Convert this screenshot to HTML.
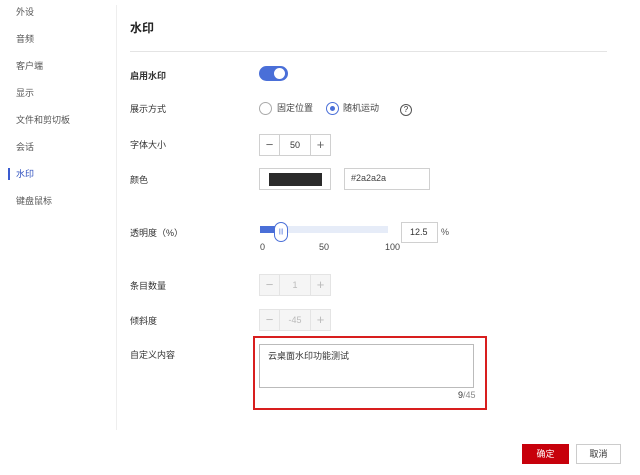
<!DOCTYPE html>
<html><head><meta charset="utf-8"><style>
body{margin:0;width:640px;height:475px;background:#fff;font-family:"Liberation Sans","Noto Sans CJK SC",sans-serif;font-size:9px;color:#333;position:relative;overflow:hidden}
.a{position:absolute;white-space:nowrap}
.side{color:#555;font-size:9px}
.lab{left:130px;font-size:9px;color:#333}
.box{position:absolute;border:1px solid #d0d0d0;box-sizing:border-box;background:#fff}
.step{position:absolute;width:72px;height:22px;border:1px solid #d0d0d0;box-sizing:border-box}
.step .m,.step .p{position:absolute;top:0;width:19px;height:20px;text-align:center;line-height:19px;font-size:13px;color:#666}
.step .m{left:0;border-right:1px solid #d0d0d0}
.step .p{right:0;border-left:1px solid #d0d0d0}
.step .v{position:absolute;left:19px;right:19px;top:0;line-height:20px;text-align:center;font-size:9px}
.dis{background:#f5f5f5;border-color:#e4e4e4}
.dis .m,.dis .p{border-color:#e4e4e4;color:#bbb}
.dis .v{color:#bbb}
</style></head><body>
<div class="a side" style="left:16px;top:5px">外设</div>
<div class="a side" style="left:16px;top:32px">音频</div>
<div class="a side" style="left:16px;top:59px">客户端</div>
<div class="a side" style="left:16px;top:86px">显示</div>
<div class="a side" style="left:16px;top:113px">文件和剪切板</div>
<div class="a side" style="left:16px;top:140px">会话</div>
<div class="a" style="left:8px;top:168px;width:2px;height:12px;background:#3a5bd0"></div>
<div class="a side" style="left:16px;top:167px;color:#2d4fbf">水印</div>
<div class="a side" style="left:16px;top:194px">键盘鼠标</div>
<div class="a" style="left:116px;top:5px;width:1px;height:425px;background:#eee"></div>

<div class="a" style="left:130px;top:19px;font-size:12px;font-weight:bold;color:#222">水印</div>
<div class="a" style="left:130px;top:51px;width:477px;height:1px;background:#e4e4e4"></div>

<div class="a lab" style="top:69px;font-weight:bold">启用水印</div>
<div class="a" style="left:259px;top:66px;width:29px;height:15px;border-radius:8px;background:#4a6fd8"></div>
<div class="a" style="left:274px;top:68px;width:11px;height:11px;border-radius:50%;background:#fff"></div>

<div class="a lab" style="top:102px">展示方式</div>
<div class="a" style="left:259px;top:102px;width:11px;height:11px;border:1px solid #aaa;border-radius:50%"></div>
<div class="a" style="left:277px;top:101px;color:#444">固定位置</div>
<div class="a" style="left:326px;top:102px;width:11px;height:11px;border:1px solid #4a6fd8;border-radius:50%"></div>
<div class="a" style="left:330px;top:106px;width:5px;height:5px;border-radius:50%;background:#4a6fd8"></div>
<div class="a" style="left:343px;top:101px;color:#444">随机运动</div>
<div class="a" style="left:400px;top:104px;width:10px;height:10px;border:1px solid #555;border-radius:50%;font-size:8px;line-height:10px;text-align:center">?</div>

<div class="a lab" style="top:138px">字体大小</div>
<div class="step" style="left:259px;top:134px"><div class="m">−</div><div class="v">50</div><div class="p">+</div></div>

<div class="a lab" style="top:173px">颜色</div>
<div class="box" style="left:259px;top:168px;width:72px;height:22px"></div>
<div class="a" style="left:269px;top:173px;width:53px;height:13px;background:#2a2a2a"></div>
<div class="box" style="left:344px;top:168px;width:86px;height:22px"></div>
<div class="a" style="left:351px;top:173px;color:#444">#2a2a2a</div>

<div class="a lab" style="top:226px">透明度（%）</div>
<div class="a" style="left:260px;top:226px;width:128px;height:7px;background:#e6ecf8"></div>
<div class="a" style="left:260px;top:226px;width:18px;height:7px;background:#4a6fd8"></div>
<div class="a" style="left:274px;top:222px;width:14px;height:20px;border:1px solid #4a6fd8;border-radius:8px;background:#fff;box-sizing:border-box;font-size:6px;color:#4a6fd8;text-align:center;line-height:18px">|||</div>
<div class="a" style="left:260px;top:242px;color:#444">0</div>
<div class="a" style="left:319px;top:242px;color:#444">50</div>
<div class="a" style="left:385px;top:242px;color:#444">100</div>
<div class="box" style="left:401px;top:222px;width:37px;height:21px"></div>
<div class="a" style="left:410px;top:227px">12.5</div>
<div class="a" style="left:441px;top:227px;color:#555">%</div>

<div class="a lab" style="top:279px">条目数量</div>
<div class="step dis" style="left:259px;top:274px"><div class="m">−</div><div class="v">1</div><div class="p">+</div></div>
<div class="a lab" style="top:314px">倾斜度</div>
<div class="step dis" style="left:259px;top:309px"><div class="m">−</div><div class="v">-45</div><div class="p">+</div></div>

<div class="a lab" style="top:348px">自定义内容</div>
<div class="a" style="left:253px;top:336px;width:234px;height:74px;border:2px solid #d81e1e;box-sizing:border-box"></div>
<div class="box" style="left:259px;top:344px;width:215px;height:44px;border-color:#bbb"></div>
<div class="a" style="left:268px;top:349px;color:#333">云桌面水印功能测试</div>
<div class="a" style="left:458px;top:390px;color:#888"><span style="color:#333">9</span>/45</div>

<div class="a" style="left:522px;top:444px;width:47px;height:20px;background:#c7000b;color:#fff;text-align:center;line-height:20px">确定</div>
<div class="a" style="left:576px;top:444px;width:45px;height:20px;border:1px solid #ccc;box-sizing:border-box;text-align:center;line-height:18px;color:#333">取消</div>
</body></html>
